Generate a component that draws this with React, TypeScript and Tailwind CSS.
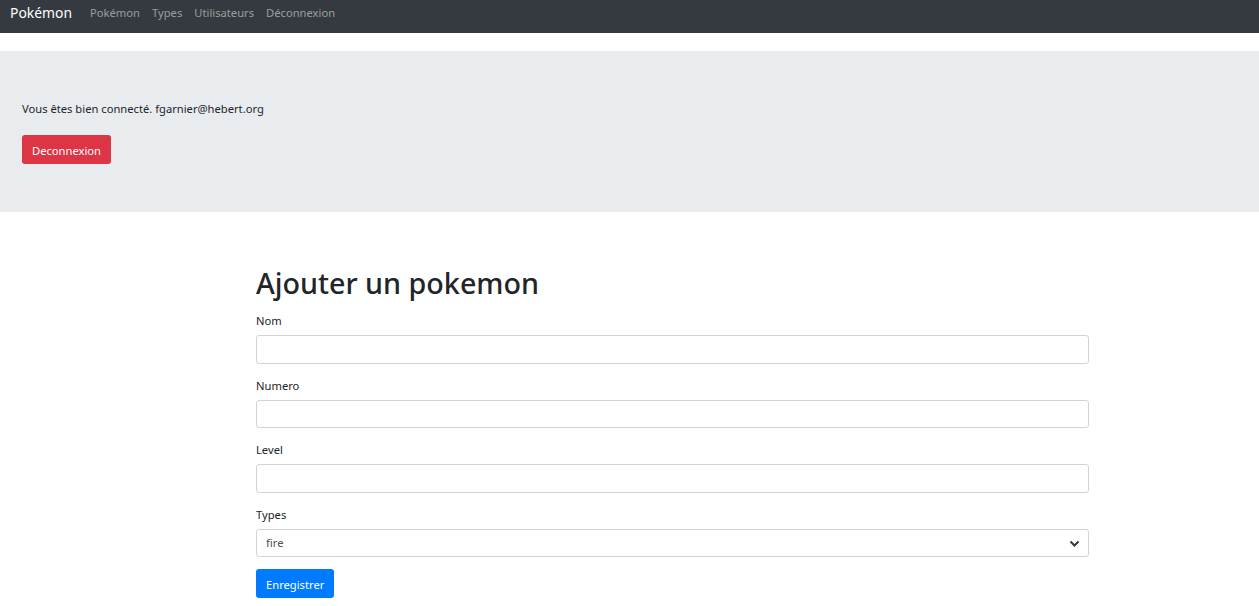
import React from "react";

const navLinks = ["Pokémon", "Types", "Utilisateurs", "Déconnexion"];

const Field: React.FC<{ label: string }> = ({ label }) => (
  <div className="mb-[12px]">
    <label className="block text-[11.2px] leading-[18px] pt-[1px] mb-[5px] text-[#212529]">{label}</label>
    <input
      type="text"
      className="block w-full h-[28.6px] px-[9px] border border-[#ced4da] rounded-[3px] bg-white text-[11.2px] focus:outline-none"
    />
  </div>
);

export default function App() {
  return (
    <div className="min-h-screen bg-white font-['Noto_Sans',sans-serif] text-[#212529]">
      {/* Navbar */}
      <nav className="h-[33px] bg-[#343a40] flex items-center px-[10px] pb-[7px]">
        <span className="text-[13.9px] leading-[20px] text-white mr-[12px]">Pokémon</span>
        <ul className="flex items-center">
          {navLinks.map((l) => (
            <li key={l} className="px-[6px] text-[11.2px] leading-[18px] text-white/50">
              {l}
            </li>
          ))}
        </ul>
      </nav>

      {/* Jumbotron */}
      <div className="mt-[18px] bg-[#e9ecef] h-[161px] px-[22px] pt-[49px]">
        <p className="text-[11.2px] leading-[18px]">Vous êtes bien connecté. fgarnier@hebert.org</p>
        <button className="mt-[17px] h-[29px] px-[10px] pt-[3px] bg-[#dc3545] text-white text-[11.2px] rounded-[3px]">
          Deconnexion
        </button>
      </div>

      {/* Form */}
      <div className="w-[833px] ml-[256px] pt-[53px]">
        <h1 className="text-[28.7px] leading-[36px] font-medium mb-[10px]">Ajouter un pokemon</h1>
        <Field label="Nom" />
        <Field label="Numero" />
        <Field label="Level" />
        <div className="mb-[12px]">
          <label className="block text-[11.2px] leading-[18px] pt-[1px] mb-[5px]">Types</label>
          <div className="relative">
            <select className="block w-full h-[28.6px] pl-[9px] pt-[1px] appearance-none border border-[#ced4da] rounded-[3px] bg-white text-[11.2px] text-[#495057] focus:outline-none">
              <option>fire</option>
              <option>water</option>
              <option>grass</option>
            </select>
            <svg
              className="absolute right-[9px] top-[10px] pointer-events-none"
              width="11"
              height="9"
              viewBox="0 0 11 9"
            >
              <path d="M1.5 2.5 L5.5 6.5 L9.5 2.5" fill="none" stroke="#343a40" strokeWidth="2" />
            </svg>
          </div>
        </div>
        <button className="h-[29px] px-[10px] pt-[3px] bg-[#007bff] text-white text-[11.2px] rounded-[3px]">
          Enregistrer
        </button>
      </div>
    </div>
  );
}
